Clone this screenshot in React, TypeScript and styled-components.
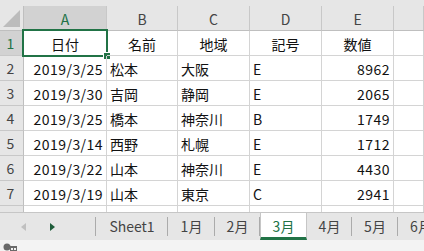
import React from "react";
import styled, { createGlobalStyle } from "styled-components";

const Global = createGlobalStyle`
  html, body { margin: 0; padding: 0; background: #ffffff; }
  body { font-family: "Noto Sans CJK JP", "Noto Sans", sans-serif; }
  * { box-sizing: border-box; }
`;

const COLS = "24px 83px 71px 72px 72px 72px 1fr";
const GREEN = "#217346";

const Frame = styled.div`
  width: 424px;
  height: 251px;
  display: flex;
  flex-direction: column;
  overflow: hidden;
  background: #fff;
`;

const Sheet = styled.div`
  height: 212px;
  overflow: hidden;
  display: flex;
  flex-direction: column;
  flex: none;
`;

const TopStrip = styled.div`
  height: 6px;
  background: #e6e6e6;
  flex: none;
`;

const HeaderRow = styled.div`
  display: grid;
  grid-template-columns: ${COLS};
  height: 25px;
  flex: none;
  background: #e6e6e6;
`;

const Corner = styled.div`
  position: relative;
  border-right: 1px solid #bfbfbf;
  border-bottom: 1px solid #bfbfbf;
  background: #e6e6e6;
  display: flex;
  align-items: flex-end;
  justify-content: flex-end;
  padding: 0 3px 3px 0;
`;

const ColHead = styled.div<{ $sel?: boolean }>`
  border-right: 1px solid #c8c8c8;
  border-bottom: 1px solid #bfbfbf;
  background: ${(p) => (p.$sel ? "#d2d2d2" : "#e6e6e6")};
  color: ${(p) => (p.$sel ? GREEN : "#444")};
  font-size: 14px;
  display: flex;
  align-items: center;
  justify-content: center;
  line-height: 1;
  padding-top: 1px;
`;

const Row = styled.div`
  display: grid;
  grid-template-columns: ${COLS};
  height: 25px;
  flex: none;
`;

const RowHead = styled.div<{ $sel?: boolean }>`
  border-right: 1px solid #bfbfbf;
  border-bottom: 1px solid #c8c8c8;
  background: ${(p) => (p.$sel ? "#d2d2d2" : "#e6e6e6")};
  color: ${(p) => (p.$sel ? GREEN : "#444")};
  font-size: 14px;
  display: flex;
  align-items: center;
  justify-content: center;
  padding-right: 2px;
`;

const Cell = styled.div<{ $align?: "left" | "right" | "center"; $num?: boolean }>`
  position: relative;
  border-right: 1px solid #d4d4d4;
  border-bottom: 1px solid #d4d4d4;
  font-size: 14px;
  color: #111;
  display: flex;
  align-items: center;
  white-space: nowrap;
  overflow: visible;
  padding: 1px 3px 0 3px;
  letter-spacing: ${(p) => (p.$num ? "0.45px" : "0")};
  justify-content: ${(p) =>
    p.$align === "right" ? "flex-end" : p.$align === "center" ? "center" : "flex-start"};
`;

const Selection = styled.div`
  position: absolute;
  left: -2px;
  top: -2px;
  right: -2px;
  bottom: -2px;
  border: 2px solid ${GREEN};
  pointer-events: none;
`;

const FillHandle = styled.div`
  position: absolute;
  right: -4px;
  bottom: -4px;
  width: 6px;
  height: 6px;
  background: ${GREEN};
  outline: 1px solid #fff;
`;

const TabBar = styled.div`
  height: 28px;
  flex: none;
  background: #e6e6e6;
  border-top: 1px solid #c6c6c6;
  display: flex;
  align-items: stretch;
  overflow: hidden;
`;

const NavArea = styled.div`
  width: 96px;
  flex: none;
  display: flex;
  align-items: center;
  padding-left: 21px;
  gap: 24px;
  border-right: 1px solid #ababab;
  margin: 4px 0 4px 0;
`;

const Tab = styled.div<{ $w: number; $active?: boolean }>`
  width: ${(p) => p.$w}px;
  flex: none;
  display: flex;
  align-items: center;
  justify-content: center;
  font-size: 14px;
  white-space: nowrap;
  color: ${(p) => (p.$active ? GREEN : "#444")};
  background: ${(p) => (p.$active ? "#ffffff" : "transparent")};
  position: relative;
  margin-top: ${(p) => (p.$active ? "-1px" : "0")};
  border-left: ${(p) => (p.$active ? "1px solid #c6c6c6" : "none")};
  border-right: ${(p) => (p.$active ? "1px solid #c6c6c6" : "none")};
  border-bottom: ${(p) => (p.$active ? `3px solid ${GREEN}` : "3px solid transparent")};
  padding-top: 2px;
  &::after {
    content: "";
    display: ${(p) => (p.$active ? "none" : "block")};
    position: absolute;
    right: 0;
    top: 4px;
    bottom: 1px;
    width: 1px;
    background: #ababab;
  }
`;

const StatusBar = styled.div`
  flex: 1;
  background: #f3f3f3;
  display: flex;
  align-items: flex-end;
  padding-left: 2px;
`;

const data: [string, string, string, string, string][] = [
  ["2019/3/25", "松本", "大阪", "E", "8962"],
  ["2019/3/30", "吉岡", "静岡", "E", "2065"],
  ["2019/3/25", "橋本", "神奈川", "B", "1749"],
  ["2019/3/14", "西野", "札幌", "E", "1712"],
  ["2019/3/22", "山本", "神奈川", "E", "4430"],
  ["2019/3/19", "山本", "東京", "C", "2941"],
  ["2019/3/17", "西野", "仙台", "A", "3310"],
];

const tabs: { label: string; w: number; active?: boolean }[] = [
  { label: "Sheet1", w: 72 },
  { label: "1月", w: 47 },
  { label: "2月", w: 45 },
  { label: "3月", w: 47, active: true },
  { label: "4月", w: 45 },
  { label: "5月", w: 46 },
  { label: "6月", w: 46 },
];

export default function App() {
  return (
    <>
      <Global />
      <Frame>
        <Sheet>
          <TopStrip />
          <HeaderRow>
            <Corner>
              <svg width="17" height="17" viewBox="0 0 17 17">
                <polygon points="17,0 17,17 0,17" fill="#bcbcbc" />
              </svg>
            </Corner>
            <ColHead $sel>A</ColHead>
            <ColHead>B</ColHead>
            <ColHead>C</ColHead>
            <ColHead>D</ColHead>
            <ColHead>E</ColHead>
            <ColHead />
          </HeaderRow>
          <Row>
            <RowHead $sel>1</RowHead>
            <Cell $align="center">
              日付
              <Selection />
              <FillHandle />
            </Cell>
            <Cell $align="center">名前</Cell>
            <Cell $align="center">地域</Cell>
            <Cell $align="center">記号</Cell>
            <Cell $align="center">数値</Cell>
            <Cell />
          </Row>
          {data.map((r, i) => (
            <Row key={i}>
              <RowHead>{i + 2}</RowHead>
              <Cell $align="right" $num>{r[0]}</Cell>
              <Cell>{r[1]}</Cell>
              <Cell>{r[2]}</Cell>
              <Cell>{r[3]}</Cell>
              <Cell $align="right" $num>{r[4]}</Cell>
              <Cell />
            </Row>
          ))}
        </Sheet>
        <TabBar>
          <NavArea>
            <svg width="5" height="8" viewBox="0 0 5 8">
              <polygon points="5,0 5,8 0,4" fill="#c0c0c0" />
            </svg>
            <svg width="5" height="8" viewBox="0 0 5 8">
              <polygon points="0,0 0,8 5,4" fill="#1e5c3a" />
            </svg>
          </NavArea>
          {tabs.map((t) => (
            <Tab key={t.label} $w={t.w} $active={t.active}>
              {t.label}
            </Tab>
          ))}
        </TabBar>
        <StatusBar>
          <svg width="16" height="8" viewBox="0 0 16 8">
            <circle cx="5" cy="4" r="3.5" fill="#6a6a6a" />
            <rect x="8" y="3" width="7" height="5" fill="#6a6a6a" />
            <rect x="9" y="5" width="2" height="2" fill="#f3f3f3" />
            <rect x="12" y="5" width="2" height="2" fill="#f3f3f3" />
          </svg>
        </StatusBar>
      </Frame>
    </>
  );
}
